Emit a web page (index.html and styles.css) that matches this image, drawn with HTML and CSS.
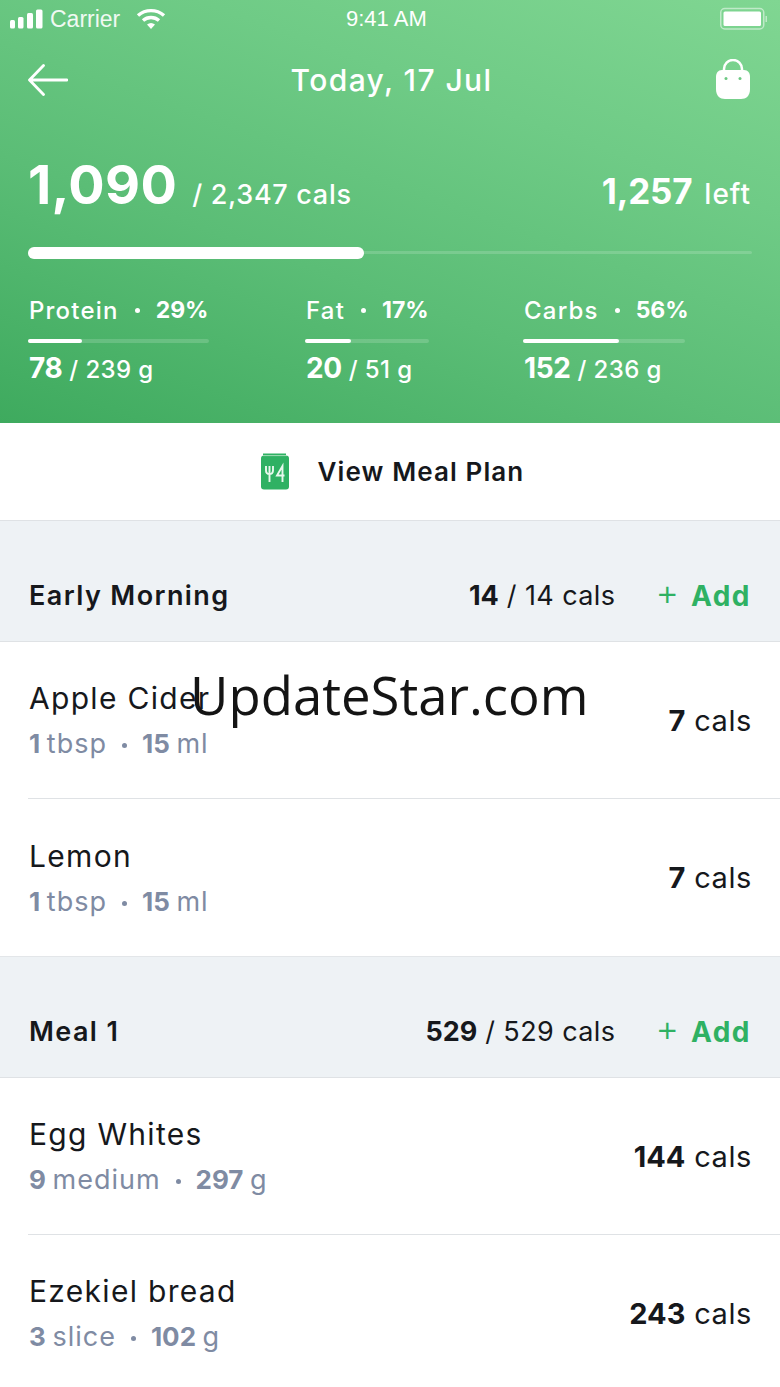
FILE: index.html
```html
<!DOCTYPE html>
<html lang="en">
<head>
<meta charset="utf-8">
<title>Today, 17 Jul</title>
<link rel="stylesheet" href="styles.css">
</head>
<body>
<div class="screen">
  <header class="hero">
    <div class="status">
      <div class="status-left">
        <svg class="signal" width="33" height="20" viewBox="0 0 33 20"><g fill="#fff"><rect x="0" y="11" width="5" height="8.500" rx="1.500"/><rect x="8" y="8" width="5.500" height="11.500" rx="1.500"/><rect x="17" y="4" width="6" height="15.500" rx="1.500"/><rect x="26" y="0.500" width="6.500" height="19" rx="1.500"/></g></svg>
        <span class="carrier">Carrier</span>
        <svg class="wifi" width="30" height="22" viewBox="0 0 30 22"><g fill="none" stroke="#fff" stroke-width="3.400"><path d="M2 7.500C9.500 1 20.500 1 28 7.500"/><path d="M7 12.500C11.500 8.500 18.500 8.500 23 12.500"/></g><path d="M11 16.500C13.500 14.500 16.500 14.500 19 16.500L15 21Z" fill="#fff"/></svg>
      </div>
      <span class="clock">9:41 AM</span>
      <svg class="battery" width="50" height="24" viewBox="0 0 50 24"><rect x="0.750" y="1.500" width="43" height="20.500" rx="4" fill="none" stroke="#fff" stroke-opacity=".5" stroke-width="1.500"/><rect x="3.500" y="4.500" width="37.500" height="14.500" rx="1.500" fill="#fff"/><rect x="45.500" y="9" width="1.500" height="6" fill="#fff" fill-opacity=".5"/></svg>
    </div>
    <nav class="nav">
      <svg width="40" height="34" viewBox="0 0 40 34"><path d="M39 17H2M15.500 2.500L1.500 17 15.500 31.500" fill="none" stroke="#fff" stroke-width="2.800" stroke-linecap="round" stroke-linejoin="round"/></svg>
      <h1 class="nav-title">Today, 17 Jul</h1>
      <svg class="bag" width="36" height="42" viewBox="0 0 36 42"><path d="M9 16V10a9 9 0 0 1 18 0v6" fill="none" stroke="#fff" stroke-width="2.500"/><path d="M7 11H29C33 11 35 14 35 18V30C35 37 31 40 26 40H10C5 40 1 37 1 30V18C1 14 3 11 7 11Z" fill="#fff"/><circle cx="11" cy="19.500" r="1.500" fill="#6cc882"/><circle cx="25" cy="19.500" r="1.500" fill="#6cc882"/></svg>
    </nav>
    <div class="totals">
      <div class="totals-main"><strong class="big">1,090</strong><span class="goal">/ 2,347 cals</span></div>
      <div class="totals-left"><strong class="left-num">1,257</strong><span class="left-word">left</span></div>
    </div>
    <div class="track main-track"><div class="fill" style="width:46.4%"></div></div>
    <div class="macros">
      <div class="macro macro-protein">
        <div class="macro-head"><span>Protein</span><i class="dot"></i><b>29%</b></div>
        <div class="track thin"><div class="fill" style="width:30%"></div></div>
        <div class="macro-val"><b>78</b> / 239 g</div>
      </div>
      <div class="macro macro-fat">
        <div class="macro-head"><span>Fat</span><i class="dot"></i><b>17%</b></div>
        <div class="track thin"><div class="fill" style="width:37%"></div></div>
        <div class="macro-val"><b>20</b> / 51 g</div>
      </div>
      <div class="macro macro-carbs">
        <div class="macro-head"><span>Carbs</span><i class="dot"></i><b>56%</b></div>
        <div class="track thin"><div class="fill" style="width:59%"></div></div>
        <div class="macro-val"><b>152</b> / 236 g</div>
      </div>
    </div>
  </header>

  <div class="plan">
    <svg width="30" height="37" viewBox="0 0 30 37"><path d="M3 0.500H26V4H3Z" fill="#2fb163"/><rect x="1" y="2.500" width="28" height="34" rx="3" fill="#2fb163"/><path d="M3 2.600H27" stroke="#bfe8cd" stroke-width=".8"/><g fill="none" stroke="#e8f8ed" stroke-width="1.900"><path d="M6 13V17.500C6 20 7.500 21 9.500 21S13 20 13 17.500V13M9.500 13V29"/><path d="M22.500 29V13L17 22.500H24.500"/></g></svg>
    <span class="plan-label">View Meal Plan</span>
  </div>

  <section class="band">
    <h2 class="band-title">Early Morning</h2>
    <div class="band-cals"><b>14</b> / 14 cals</div>
    <div class="add"><span class="plus">+</span>Add</div>
  </section>
  <div class="item">
    <div><div class="name">Apple Cider</div><div class="qty"><b>1</b> tbsp<i class="dot"></i><b>15</b> ml</div></div>
    <div class="cals"><b>7</b> cals</div>
  </div>
  <div class="item">
    <div><div class="name">Lemon</div><div class="qty"><b>1</b> tbsp<i class="dot"></i><b>15</b> ml</div></div>
    <div class="cals"><b>7</b> cals</div>
  </div>

  <section class="band">
    <h2 class="band-title">Meal 1</h2>
    <div class="band-cals"><b>529</b> / 529 cals</div>
    <div class="add"><span class="plus">+</span>Add</div>
  </section>
  <div class="item">
    <div><div class="name">Egg Whites</div><div class="qty"><b>9</b> medium<i class="dot"></i><b>297</b> g</div></div>
    <div class="cals"><b>144</b> cals</div>
  </div>
  <div class="item">
    <div><div class="name">Ezekiel bread</div><div class="qty"><b>3</b> slice<i class="dot"></i><b>102</b> g</div></div>
    <div class="cals"><b>243</b> cals</div>
  </div>
  <div class="watermark">UpdateStar.com</div>
</div>
</body>
</html>
```

FILE: styles.css
```css
* { box-sizing: border-box; }
html, body { margin: 0; padding: 0; background: #fff; }
.screen { position: relative; width: 780px; height: 1387px; overflow: hidden; font-family: Inter, "Noto Sans", sans-serif; color: #16181c; }
.hero { height: 423px; padding: 0 28px; color: #fff; background: linear-gradient(200deg, #80d692 0%, #6fcb86 30%, #5bbd76 62%, #3eaa5e 100%); }
.status { height: 38px; margin: 0 -18px 0 -18px; display: flex; align-items: center; justify-content: space-between; position: relative; }
.status-left { display: flex; align-items: center; gap: 7px; }
.carrier { font: 400 23px "Liberation Sans", sans-serif; opacity: .9; }
.wifi { margin-left: 9px; }
.clock { position: absolute; left: 336px; font: 400 22px "Liberation Sans", sans-serif; }
.nav { height: 46px; margin-top: 19px; display: flex; align-items: center; justify-content: space-between; }
.nav-title { margin: 0; font-size: 30px; font-weight: 500; letter-spacing: 1.400px; }
.bag { margin-right: 1px; }
.totals { margin-top: 49px; height: 70px; display: flex; justify-content: space-between; align-items: baseline; padding-right: 1px; }
.big { font-size: 54px; font-weight: 700; letter-spacing: .3px; }
.goal { margin-left: 15px; font-size: 27px; font-weight: 500; letter-spacing: .7px; }
.left-num { font-size: 35px; font-weight: 700; letter-spacing: -.2px; }
.left-word { margin-left: 12px; font-size: 28px; font-weight: 500; letter-spacing: 1px; }
.track { height: 3px; background: rgba(255,255,255,.16); border-radius: 3px; display: flex; align-items: center; }
.fill { height: 100%; background: #fff; border-radius: 6px; }
.main-track { margin-top: 29px; }
.main-track .fill { height: 12px; flex: none; }
.macros { display: flex; margin-top: 42px; }
.macro-protein { width: 181px; margin-right: 96px; }
.macro-fat { width: 124px; margin-right: 94px; }
.macro-carbs { width: 162px; }
.macro-head { display: flex; align-items: center; font-size: 24px; font-weight: 500; height: 28px; white-space: nowrap; letter-spacing: 1.200px; padding-left: 1px; }
.macro-head b { font-weight: 700; font-size: 23px; letter-spacing: 0; }
.dot { display: inline-block; flex: none; width: 5px; height: 5px; border-radius: 50%; background: currentColor; margin: 0 16px; vertical-align: middle; }
.thin { margin-top: 15px; height: 4px; }
.macro-val { margin-top: 8px; font-size: 24px; font-weight: 500; white-space: nowrap; letter-spacing: .4px; padding-left: 1px; }
.macro-val b { font-size: 28px; font-weight: 700; letter-spacing: -.3px; }
.plan { height: 98px; padding-left: 4px; display: flex; align-items: center; justify-content: center; gap: 28px; border-bottom: 1px solid #dfe2e5; }
.plan-label { font-size: 26px; font-weight: 600; letter-spacing: 1.100px; }
.band { height: 121px; padding: 29px 29px 0 29px; display: flex; align-items: center; background: #eef2f5; border-bottom: 1px solid #dfe2e5; }
.band-title { flex: 1; margin: 0; font-size: 27px; font-weight: 600; letter-spacing: 1.400px; }
.band-cals { font-size: 27px; font-weight: 400; letter-spacing: .4px; }
.band-cals b { font-weight: 700; letter-spacing: 0; }
.add { margin-left: 40px; font-size: 28px; font-weight: 700; color: #2fb163; display: flex; align-items: center; letter-spacing: 1.500px; }
.plus { font-weight: 300; font-size: 36px; line-height: 1; margin: 0 12px 7px 0; letter-spacing: 0; }
.item { height: 157px; margin-left: 28px; padding-right: 28px; display: flex; justify-content: space-between; align-items: center; border-bottom: 1px solid #dfe2e5; }
.item:has(+ .band) { height: 158px; margin-left: 0; padding-left: 28px; border-bottom: 1px solid #e3e6e9; }
.name { font-size: 30px; font-weight: 400; letter-spacing: 1.300px; line-height: 36px; margin-left: 1px; }
.qty { margin-top: 11px; margin-left: 1px; font-size: 27px; color: #7f8ba3; font-weight: 400; letter-spacing: 1px; word-spacing: -2px; }
.qty .dot { margin: 0 15px; }
.qty b { font-weight: 700; font-size: 26px; letter-spacing: 0; }
.cals { font-size: 29px; letter-spacing: .6px; }
.cals b { font-weight: 700; letter-spacing: 0; }
.watermark { position: absolute; left: 190px; top: 659px; font: 400 52.700px "Open Sans", sans-serif; color: #141414; }
```
